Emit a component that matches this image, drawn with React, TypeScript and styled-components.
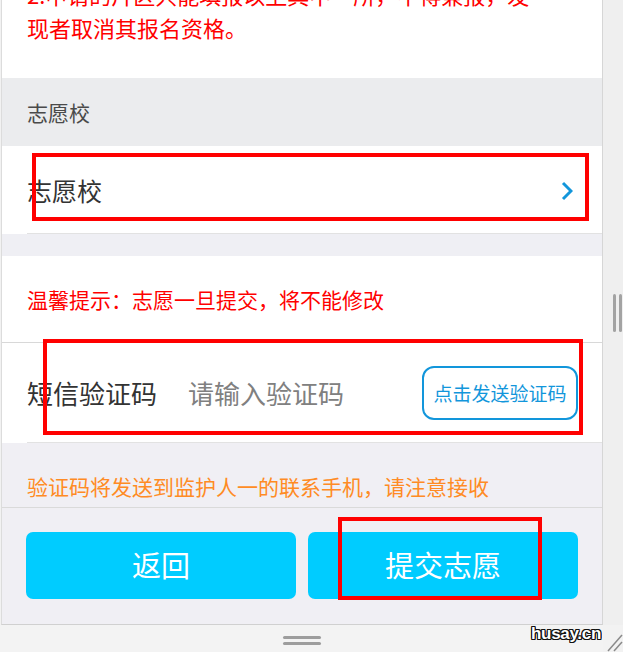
import React from "react";
import styled, { createGlobalStyle } from "styled-components";

const Global = createGlobalStyle`
  html, body { margin: 0; padding: 0; }
  body {
    width: 623px;
    height: 652px;
    overflow: hidden;
    font-family: "Noto Sans CJK SC", "Noto Sans", "Liberation Sans", sans-serif;
    background: #f2f2f2;
  }
  * { box-sizing: border-box; }
`;

const Page = styled.div`
  position: relative;
  width: 623px;
  height: 652px;
  overflow: hidden;
  display: grid;
  grid-template-columns: 603px 20px;
  grid-template-rows: 625px 27px;
  background: #f2f2f2;
`;

const Phone = styled.div`
  margin-left: 1px;
  border-left: 1px solid #dcdcdc;
  border-right: 1px solid #d6d6d6;
  border-bottom: 1px solid #d0d0d0;
  background: #f0eff4;
  display: flex;
  flex-direction: column;
  overflow: hidden;
`;

const Notice = styled.div`
  margin-top: -22px;
  padding: 0 20px 34px 25px;
  background: #fff;
  color: #ff0000;
  font-size: 22px;
  line-height: 33px;
  white-space: nowrap;
`;

const SectionHeader = styled.div`
  height: 68px;
  flex-shrink: 0;
  display: flex;
  align-items: center;
  padding-left: 25px;
  background: #ebecee;
  color: #4a4a4a;
  font-size: 21px;
`;

const Card = styled.div`
  background: #fff;
  padding-left: 25px;
  flex-shrink: 0;
`;

const RowInner = styled.div<{ $h: number }>`
  height: ${(p) => p.$h}px;
  display: flex;
  align-items: center;
  border-bottom: 1px solid #e2e2e2;
`;

const Label = styled.span<{ $size: number }>`
  font-size: ${(p) => p.$size}px;
  color: #333;
  white-space: nowrap;
`;

const Chevron = styled.svg`
  margin-left: auto;
  margin-right: 29px;
  margin-top: 2px;
`;

const Gap = styled.div`
  height: 22px;
  flex-shrink: 0;
  background: #efeff4;
`;

const Tip = styled.div`
  height: 87px;
  flex-shrink: 0;
  background: #fff;
  padding-left: 25px;
  display: flex;
  align-items: center;
  border-bottom: 1px solid #d8d8d8;
  color: #ff0000;
  font-size: 21px;
`;

const CodeInput = styled.input`
  margin-left: 31px;
  width: 200px;
  border: none;
  outline: none;
  background: transparent;
  font-family: inherit;
  font-size: 26px;
  color: #333;
  padding: 0;
  &::placeholder { color: #808080; }
`;

const SendButton = styled.button`
  margin-left: auto;
  margin-right: 24px;
  width: 156px;
  height: 54px;
  border: 2px solid #1296db;
  border-radius: 12px;
  background: #fff;
  color: #1296db;
  font-family: inherit;
  font-size: 19px;
  padding: 0;
  cursor: pointer;
`;

const Hint = styled.div`
  flex-shrink: 0;
  padding: 30px 0 8px 25px;
  line-height: 26px;
  font-size: 21px;
  color: #ff8b24;
  background: #f0eff4;
  white-space: nowrap;
`;

const Footer = styled.div`
  flex: 1;
  border-top: 1px solid #dadada;
  background: #f0eff4;
  padding: 24px 24px 0 24px;
  display: grid;
  grid-template-columns: 1fr 1fr;
  column-gap: 12px;
  align-content: start;
`;

const ActionButton = styled.button`
  height: 67px;
  border: none;
  border-radius: 7px;
  background: #00ccff;
  color: #fff;
  font-family: inherit;
  font-size: 29px;
  line-height: 1;
  padding: 0 0 3px;
  cursor: pointer;
`;

const Gutter = styled.div`
  background: #efefef;
  display: flex;
  align-items: center;
  justify-content: center;
  padding-left: 8px;
  gap: 3px;
`;

const GripBar = styled.span`
  width: 3px;
  height: 38px;
  border-radius: 2px;
  background: #a3a3a3;
`;

const BottomBar = styled.div`
  background: #f3f3f3;
  display: flex;
  flex-direction: column;
  align-items: center;
  padding-top: 11px;
  gap: 3px;
`;

const HBar = styled.span`
  width: 38px;
  height: 3px;
  border-radius: 2px;
  background: #9d9d9d;
`;

const Watermark = styled.div`
  position: absolute;
  left: 531px;
  top: 624px;
  font-family: "Liberation Sans", Arial, sans-serif;
  font-weight: 700;
  font-size: 17px;
  letter-spacing: -0.3px;
  color: #fff;
  text-shadow:
    -1px -1px 0 #111, 1px -1px 0 #111, -1px 1px 0 #111, 1px 1px 0 #111,
    0 -1px 0 #111, 0 1px 0 #111, -1px 0 0 #111, 1px 0 0 #111;
`;

const ResizeGrip = styled.svg`
  position: absolute;
  right: 0;
  bottom: 0;
`;

const Annotation = styled.div<{ $x: number; $y: number; $w: number; $h: number }>`
  position: absolute;
  left: ${(p) => p.$x}px;
  top: ${(p) => p.$y}px;
  width: ${(p) => p.$w}px;
  height: ${(p) => p.$h}px;
  border: 4px solid #ff0000;
  pointer-events: none;
`;

export default function App() {
  return (
    <>
      <Global />
      <Page>
        <Phone>
          <Notice>
            2.申请的片区只能填报以上其中一所，不得兼报，发
            <br />
            现者取消其报名资格。
          </Notice>
          <SectionHeader>志愿校</SectionHeader>
          <Card>
            <RowInner $h={88}>
              <Label $size={25}>志愿校</Label>
              <Chevron width="12" height="20" viewBox="0 0 12 20">
                <polyline
                  points="2,2 10,10 2,18"
                  fill="none"
                  stroke="#1296db"
                  strokeWidth="3"
                />
              </Chevron>
            </RowInner>
          </Card>
          <Gap />
          <Tip>温馨提示：志愿一旦提交，将不能修改</Tip>
          <Card>
            <RowInner $h={100}>
              <Label $size={26}>短信验证码</Label>
              <CodeInput placeholder="请输入验证码" />
              <SendButton>点击发送验证码</SendButton>
            </RowInner>
          </Card>
          <Hint>验证码将发送到监护人一的联系手机，请注意接收</Hint>
          <Footer>
            <ActionButton>返回</ActionButton>
            <ActionButton>提交志愿</ActionButton>
          </Footer>
        </Phone>
        <Gutter>
          <GripBar />
          <GripBar />
        </Gutter>
        <BottomBar>
          <HBar />
          <HBar />
        </BottomBar>
        <Annotation $x={32} $y={153} $w={557} $h={68} />
        <Annotation $x={43} $y={339} $w={540} $h={96} />
        <Annotation $x={338} $y={517} $w={204} $h={83} />
        <Watermark>husay.cn</Watermark>
        <ResizeGrip width="16" height="20" viewBox="0 0 16 20">
          <line x1="1" y1="19" x2="15" y2="3" stroke="#8a8a8a" strokeWidth="1.5" />
          <line x1="7" y1="19" x2="15" y2="10" stroke="#8a8a8a" strokeWidth="1.5" />
        </ResizeGrip>
      </Page>
    </>
  );
}
